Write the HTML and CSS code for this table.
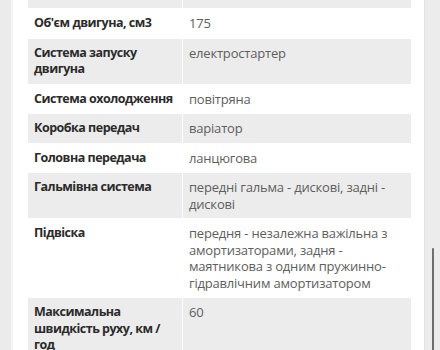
FILE: index.html
```html
<!DOCTYPE html>
<html lang="uk">
<head>
<meta charset="utf-8">
<title>Характеристики</title>
<link rel="stylesheet" href="styles.css">
</head>
<body>
<div class="page">
  <aside class="side"></aside>
  <main class="content">
    <table class="specs">
      <colgroup>
        <col class="col-name">
        <col class="col-value">
      </colgroup>
      <tbody>
        <tr class="spacer"><td></td><td></td></tr>
        <tr><th>Об'єм двигуна, см3</th><td>175</td></tr>
        <tr><th>Система запуску двигуна</th><td>електростартер</td></tr>
        <tr><th>Система охолодження</th><td>повітряна</td></tr>
        <tr><th>Коробка передач</th><td>варіатор</td></tr>
        <tr><th>Головна передача</th><td>ланцюгова</td></tr>
        <tr><th>Гальмівна система</th><td>передні гальма - дискові, задні - дискові</td></tr>
        <tr><th>Підвіска</th><td>передня - незалежна важільна з амортизаторами, задня - маятникова з одним пружинно-гідравлічним амортизатором</td></tr>
        <tr><th>Максимальна швидкість руху, км / год</th><td>60</td></tr>
      </tbody>
    </table>
  </main>
  <div class="track"><div class="thumb"></div></div>
</div>
</body>
</html>
```
FILE: styles.css
```css
html, body {
  margin: 0;
  height: 100%;
  overflow: hidden;
  background: #fff;
}

.page {
  display: flex;
  height: 350px;
  font-family: "Open Sans", "Noto Sans", sans-serif;
  font-size: 13px;
  line-height: 16.5px;
}

.side {
  width: 11px;
  flex: none;
  background: #ebebeb;
  border-right: 2px solid #f6f6f6;
}

.content {
  flex: 1;
  padding: 0 13px 0 14px;
  overflow: hidden;
}

.specs {
  width: 385px;
  border-collapse: collapse;
  table-layout: fixed;
}

.col-name {
  width: 155px;
}

.specs th,
.specs td {
  border: 1px solid #fff;
  padding: 6px;
  text-align: left;
  vertical-align: top;
}

.specs th {
  padding-right: 1px;
  font-size: 12.5px;
  font-weight: 700;
  letter-spacing: -0.5px;
  color: #2b2b2b;
}

.specs td {
  letter-spacing: -0.2px;
  color: #5e5e5e;
}

.specs tr:nth-child(odd) th,
.specs tr:nth-child(odd) td {
  background: #ececec;
}

.specs .spacer td {
  height: 8px;
  padding: 0;
  border-top: 0;
}

.track {
  width: 15px;
  flex: none;
  background: #ececec;
  border-left: 1px solid #e2e2e2;
  position: relative;
}

.thumb {
  position: absolute;
  left: 7px;
  top: 248px;
  width: 2px;
  height: 110px;
  background: #6e6e6e;
  border-radius: 1px;
}
```
